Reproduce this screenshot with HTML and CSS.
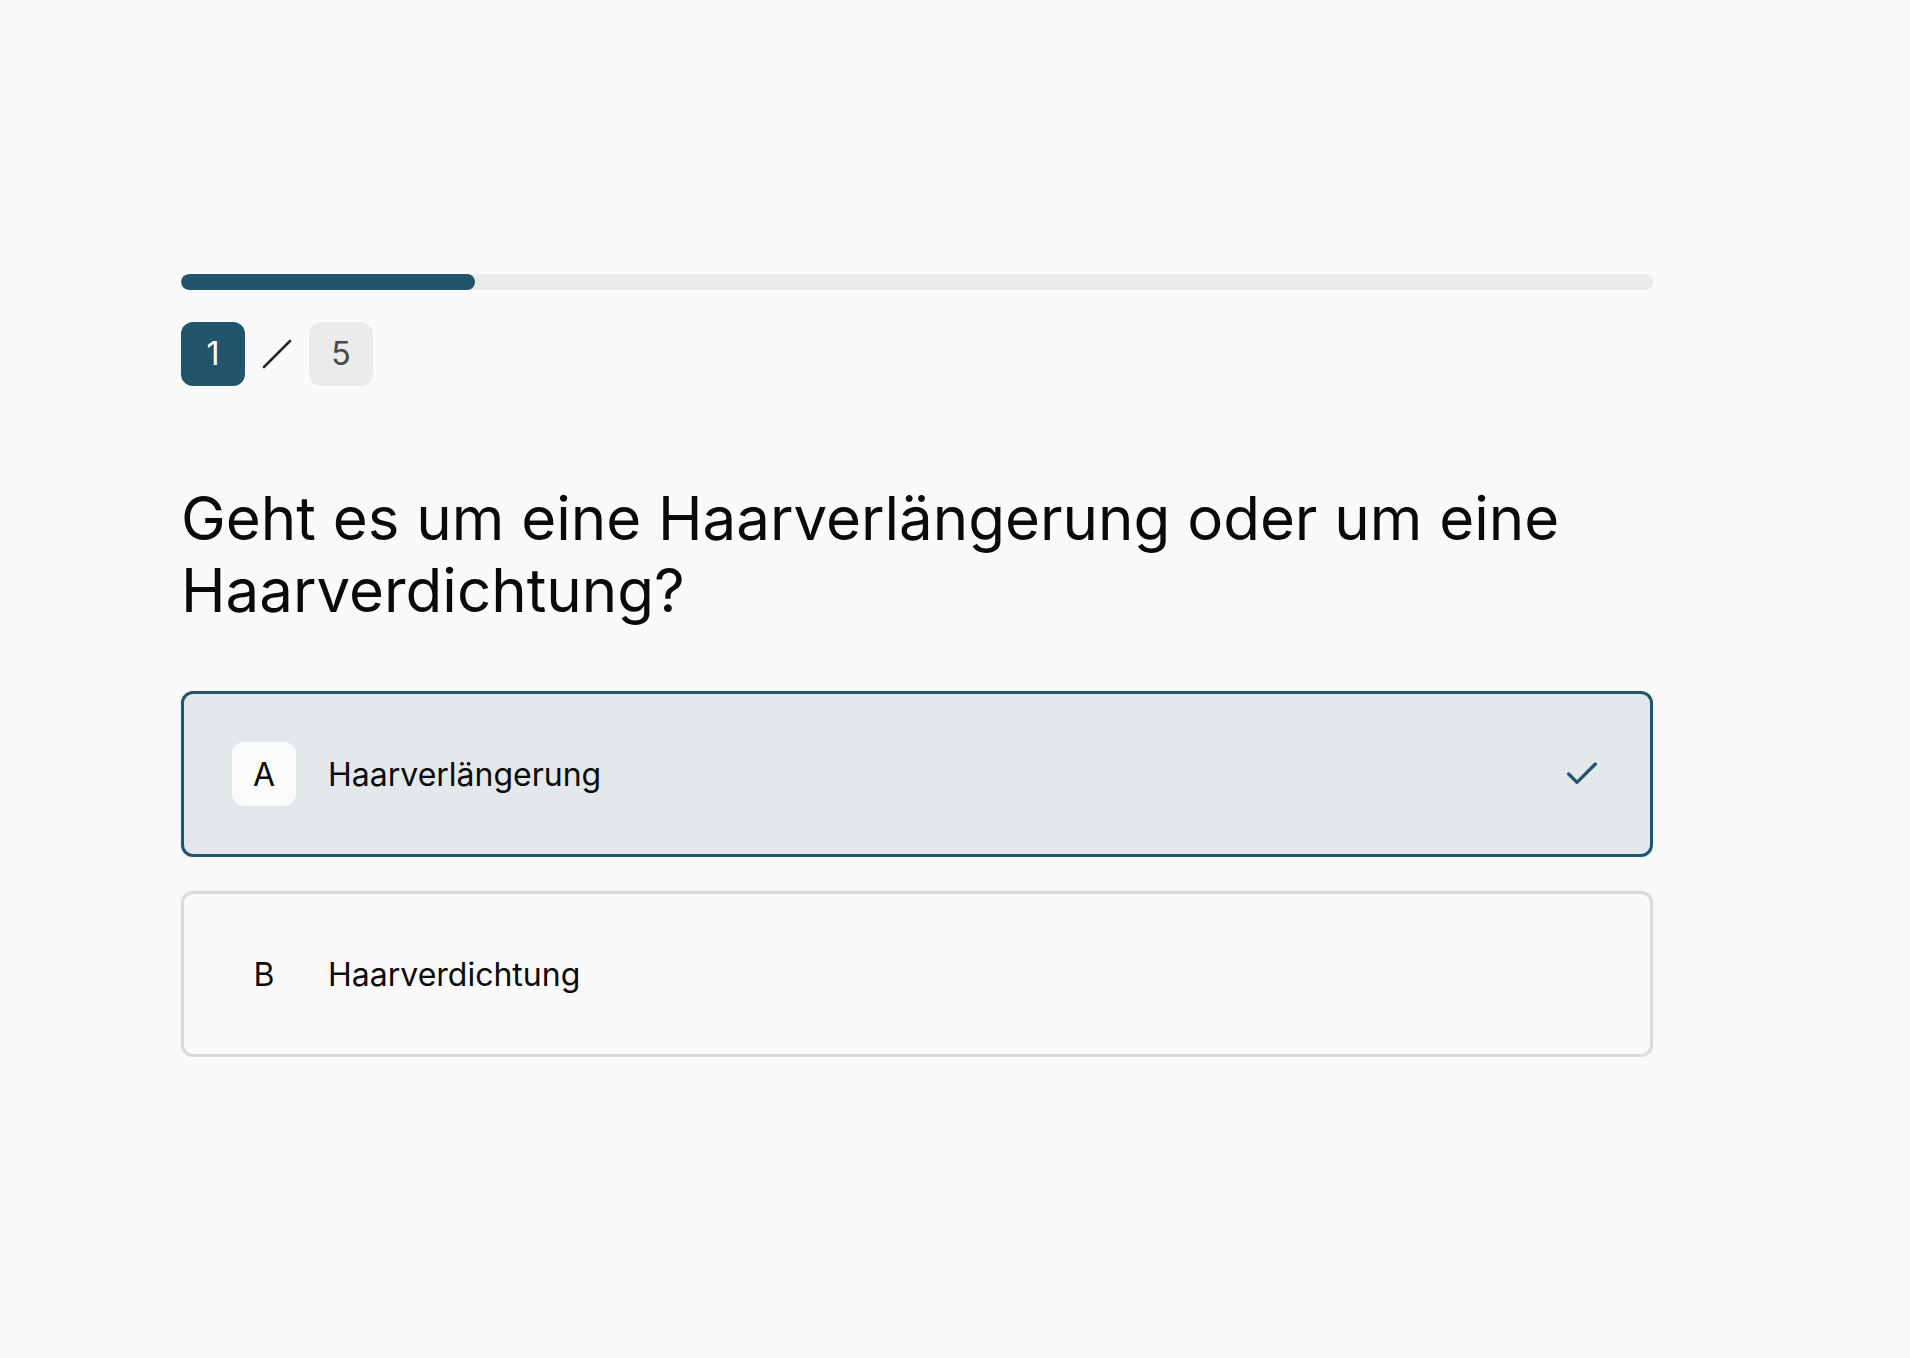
FILE: index.html
```html
<!DOCTYPE html>
<html lang="de">
<head>
<meta charset="utf-8">
<title>Frage 1 von 5</title>
<link rel="stylesheet" href="styles.css">
</head>
<body>
<main class="quiz">
  <div class="progress"><div class="progress-fill" style="width: 20%"></div></div>
  <div class="steps">
    <span class="step current">1</span>
    <svg class="slash" width="32" height="32" viewBox="0 0 32 32" aria-hidden="true"><line x1="3" y1="29" x2="29" y2="3" stroke="#2b2b2b" stroke-width="2.6" stroke-linecap="round"/></svg>
    <span class="step total">5</span>
  </div>
  <h1 class="question">Geht es um eine Haarverlängerung oder um eine Haarverdichtung?</h1>
  <div class="options">
    <button class="option selected">
      <span class="letter">A</span>
      <span class="label">Haarverlängerung</span>
      <svg class="check" width="40" height="40" viewBox="0 0 24 24" fill="none" stroke="#22556b" stroke-width="2" stroke-linecap="round" stroke-linejoin="round" aria-hidden="true"><path d="M20 6 9 17l-5-5"/></svg>
    </button>
    <button class="option">
      <span class="letter">B</span>
      <span class="label">Haarverdichtung</span>
    </button>
  </div>
</main>
</body>
</html>
```
FILE: styles.css
```css
html, body {
  margin: 0;
  padding: 0;
  background: #fafafa;
}
body {
  font-family: Inter, "Noto Sans", sans-serif;
  color: #0a0a0a;
}
.quiz {
  width: 1472px;
  padding: 274px 0 0 181px;
  display: flex;
  flex-direction: column;
}
.progress {
  height: 16px;
  border-radius: 8px;
  background: #ebebeb;
  overflow: hidden;
}
.progress-fill {
  height: 100%;
  border-radius: 8px;
  background: #22556b;
}
.steps {
  margin-top: 32px;
  display: flex;
  align-items: center;
  gap: 16px;
}
.step {
  width: 64px;
  height: 64px;
  border-radius: 12px;
  display: flex;
  align-items: center;
  justify-content: center;
  font-size: 32px;
  line-height: 1;
}
.step.current {
  background: #22556b;
  color: #ffffff;
}
.step.total {
  background: #ebebeb;
  color: #474747;
}
.question {
  margin: 96px 0 0;
  font-size: 60px;
  line-height: 72px;
  font-weight: 400;
  color: #0a0a0a;
}
.options {
  margin-top: 65px;
  display: flex;
  flex-direction: column;
  gap: 34px;
}
.option {
  display: flex;
  align-items: center;
  gap: 32px;
  padding: 48px;
  border: 3px solid #dadada;
  border-radius: 12px;
  background: #fafafa;
  font-family: inherit;
  text-align: left;
  cursor: pointer;
  box-shadow: 0 0 6px rgba(0, 0, 0, 0.04);
}
.option.selected {
  border-color: #22556b;
  background: #e3e8eb;
}
.letter {
  width: 64px;
  height: 64px;
  flex: none;
  border-radius: 12px;
  display: flex;
  align-items: center;
  justify-content: center;
  font-size: 32px;
  color: #0a0a0a;
}
.option.selected .letter {
  background: #fbfbfb;
}
.label {
  flex: 1;
  font-size: 32px;
  color: #0a0a0a;
}
.check {
  flex: none;
}
```
